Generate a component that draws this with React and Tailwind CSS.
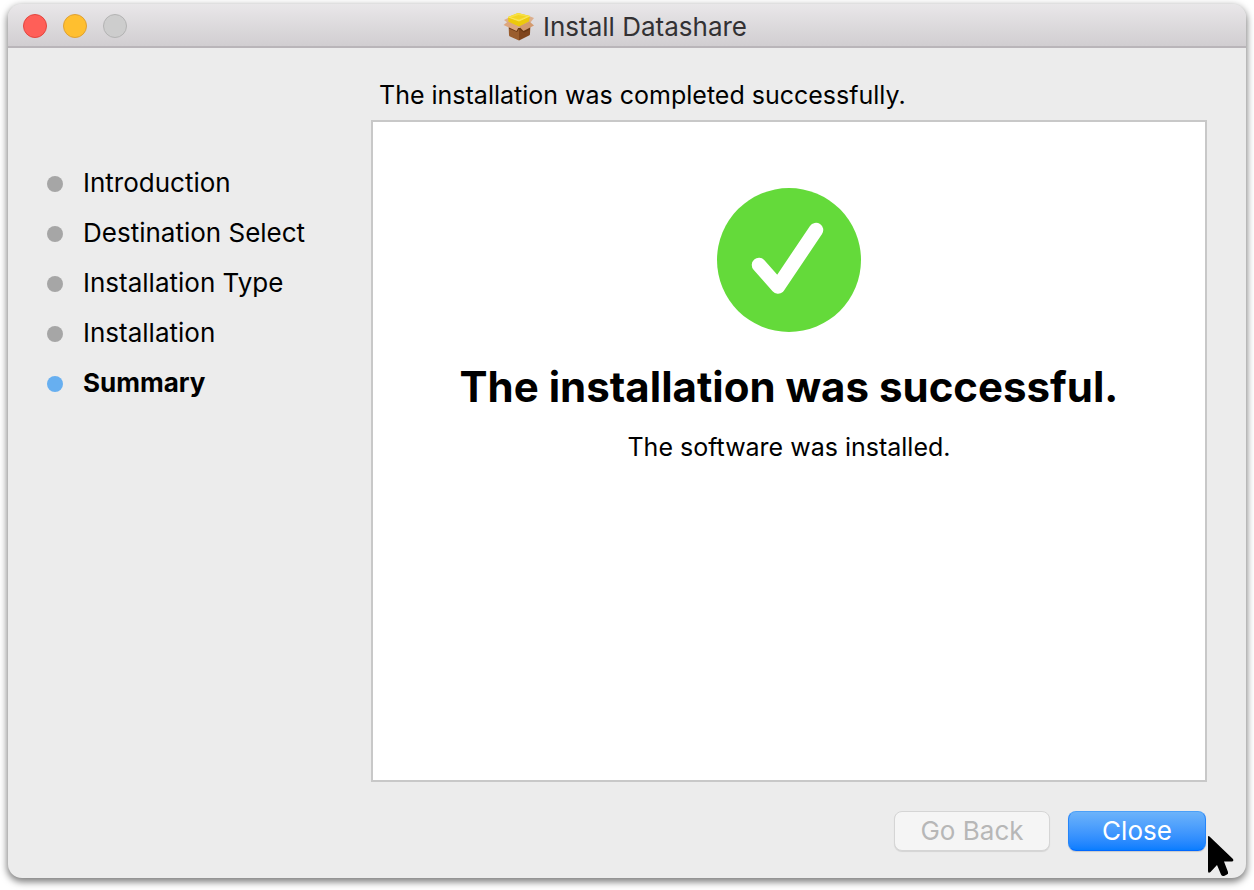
import React from "react";

const steps = [
  "Introduction",
  "Destination Select",
  "Installation Type",
  "Installation",
  "Summary",
];
const current = "Summary";

function PackageIcon() {
  return (
    <svg viewBox="0 0 32 30" className="h-[30px] w-8 shrink-0" aria-hidden="true">
      <path d="M5.500 12 L16 16 V28.500 L7 24.500 Q6 24 6 23 Z" fill="#9a5d2e" />
      <path d="M16 16 L27.500 11 L27 22 Q27 23 26 23.500 L16 28.500 Z" fill="#80451c" />
      <path d="M16 16 L27 12 V17.500 L21 20.500 L16 17 L14 20 L6 16.500 V13 Z" fill="#693712" />
      <path d="M1 8 L6 5.500 L16 4 L26 4 L31 6 L27 11 L16 15 L5 11 Z" fill="#dcae8c" />
      <path d="M5 5 L15 1 L27 4 L26 9.500 L16 15 L5.500 11 Z" fill="#edc90c" />
      <path d="M5 5 L15 1 L27 4 L16 9 Z" fill="#f8e144" />
      <path d="M8 5.500 L15.500 3 L23.500 4.500 L16 7.500 Z" fill="#f3d423" />
      <path d="M5 5 L16 9 L27 4" fill="none" stroke="#fbed73" strokeWidth="0.700" />
      <path d="M5 9.500 L16 14.500 L13.500 19 L0.500 13 Z" fill="#dda67d" />
      <path d="M16 14.500 L26.500 9.500 L31 13.500 L20.500 19 Z" fill="#d39a6e" />
    </svg>
  );
}

function TitleBar() {
  return (
    <header className="relative flex h-11 items-center justify-center border-b-2 border-[#b9b5b9] bg-linear-to-b from-[#e9e7e9] to-[#d1ced1]">
      <div className="absolute inset-y-0 left-[15px] flex items-center gap-4 pt-0.5">
        <button type="button" aria-label="Close window" className="size-6 rounded-full border border-[#e2463f] bg-[#ff5f58]" />
        <button type="button" aria-label="Minimize window" className="size-6 rounded-full border border-[#dea033] bg-[#ffbf2f]" />
        <button type="button" aria-label="Zoom window" disabled className="size-6 rounded-full border border-[#b3b3b3] bg-[#cdcdcd]" />
      </div>
      <div className="flex items-center gap-2 pt-1 pr-1">
        <PackageIcon />
        <h1 className="text-[26px] leading-8 text-[#333133]">Install Datashare</h1>
      </div>
    </header>
  );
}

function Pointer() {
  return (
    <svg viewBox="0 0 28 42" className="pointer-events-none absolute top-6 left-full h-[42px] w-7" aria-hidden="true">
      <path d="M2 2 Q2 0.500 3.500 1.500 L27 24 Q28 26 26 26.500 H18 L22 37 Q22.500 39 21 39.500 L18 41 Q16 41.500 15 39.500 L11 30 L4.500 37 Q2 39 2 36 Z" fill="#000" />
    </svg>
  );
}

export default function App() {
  return (
    <div className="flex min-h-screen flex-col bg-white px-2 pt-1 pb-3 font-['Inter',sans-serif] text-[25px] leading-8 text-black">
      <div className="flex flex-1 flex-col overflow-hidden rounded-[14px] bg-[#ececec] shadow-[0_3px_7px_1px_rgba(0,0,0,0.5)]">
        <TitleBar />
        <div className="flex flex-1 pr-[39px]">
          <nav aria-label="Installation steps" className="w-[363px] shrink-0 pt-[119px] pl-[39px]">
            <ol className="flex flex-col gap-[18px] text-[26px] leading-8">
              {steps.map((step) => (
                <li
                  key={step}
                  aria-current={step === current ? "step" : undefined}
                  className={step === current ? "flex items-center gap-5 font-bold" : "flex items-center gap-5"}
                >
                  <span className={step === current ? "mt-0.5 size-4 rounded-full bg-[#67aff0]" : "mt-0.5 size-4 rounded-full bg-[#a6a6a6]"} />
                  {step}
                </li>
              ))}
            </ol>
          </nav>
          <div className="flex min-w-0 flex-1 flex-col pt-[31px] pb-[27px]">
            <p className="pb-[9px] pl-2">The installation was completed successfully.</p>
            <main className="flex flex-1 flex-col items-center border-2 border-[#c8c8c8] bg-white pt-[66px] text-center">
              <svg viewBox="0 0 144 144" className="size-36" aria-hidden="true">
                <circle cx="72" cy="72" r="72" fill="#64da3a" />
                <path d="M42 77 L61 98.500 L99 42" fill="none" stroke="#fff" strokeWidth="14.500" strokeLinecap="round" strokeLinejoin="round" />
              </svg>
              <h2 className="pt-[31px] text-[42px] leading-12 font-bold">The installation was successful.</h2>
              <p className="pt-5">The software was installed.</p>
            </main>
            <div className="flex justify-end gap-[18px] pt-[29px] pr-px text-[26px] leading-8">
              <button type="button" disabled className="h-10 w-39 rounded-lg border border-[#d5d5d5] bg-[#f5f5f5] text-[#b7b7b7] shadow-[0_1px_1px_rgba(0,0,0,0.1)]">
                Go Back
              </button>
              <div className="relative">
                <button type="button" className="h-10 w-[138px] rounded-lg border border-t-[#4ba0f8] border-x-[#2485fa] border-b-[#0068ff] bg-linear-to-b from-[#6cb3fa] to-[#087dff] text-white shadow-[0_1px_1px_rgba(0,0,0,0.15)]">
                  Close
                </button>
                <Pointer />
              </div>
            </div>
          </div>
        </div>
      </div>
    </div>
  );
}
